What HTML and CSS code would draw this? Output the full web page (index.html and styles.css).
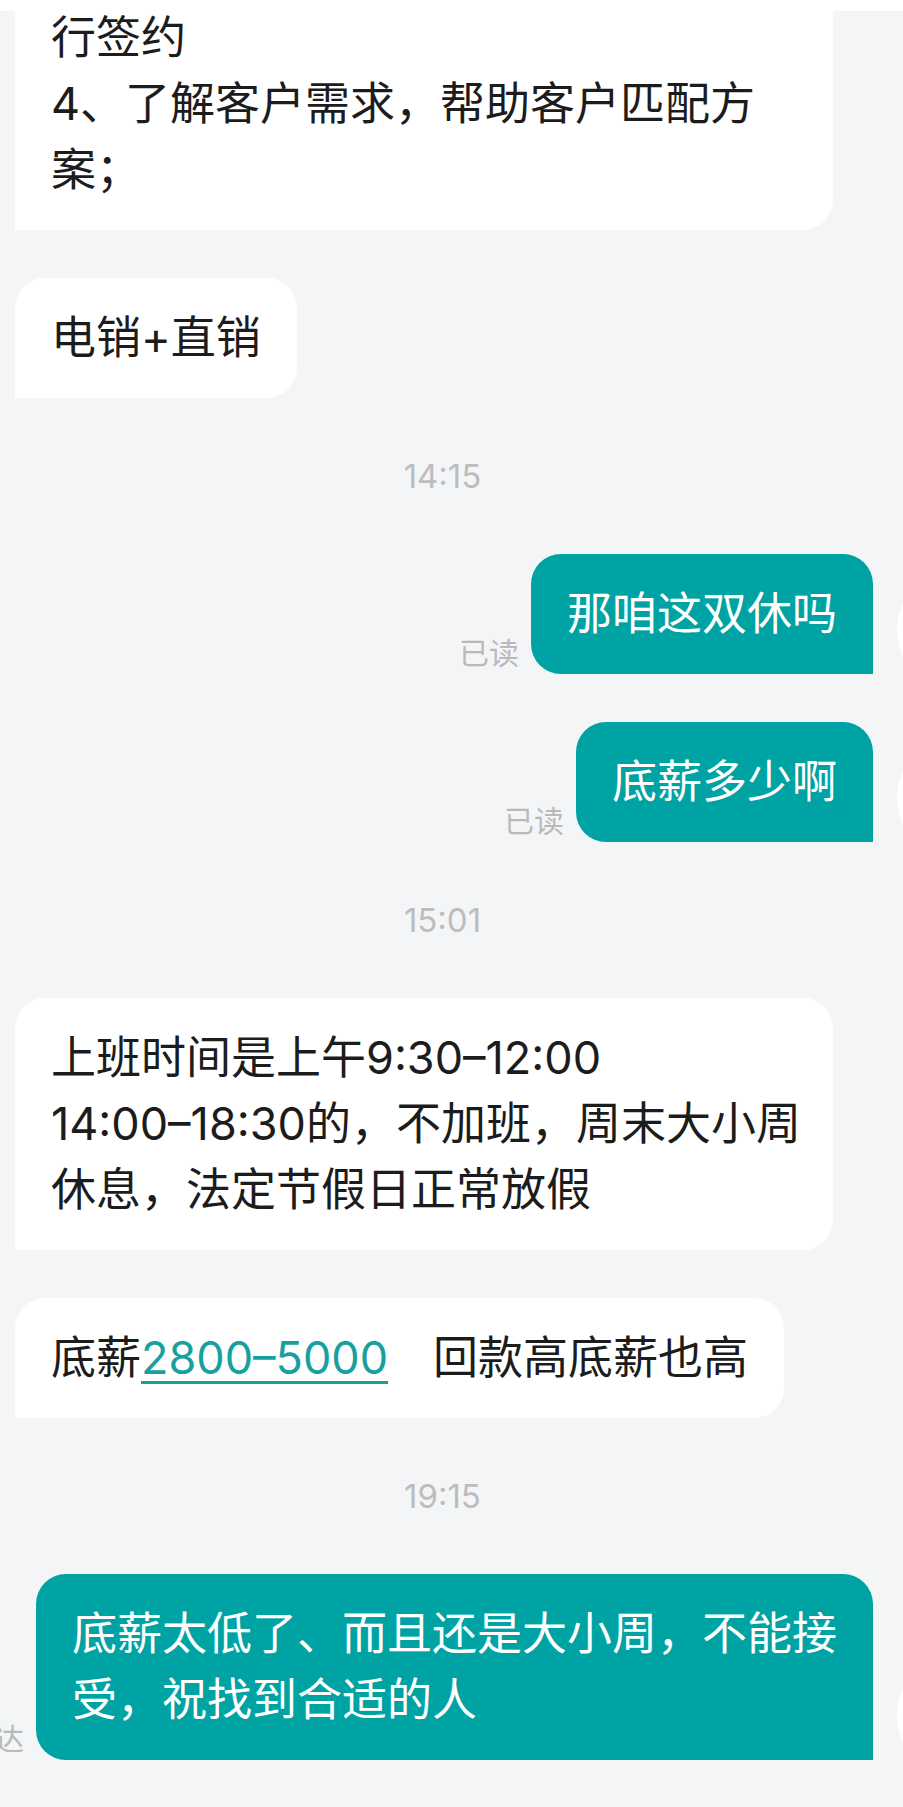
FILE: index.html
```html
<!DOCTYPE html>
<html lang="zh-CN">
<head>
<meta charset="utf-8">
<title>聊天</title>
<link rel="stylesheet" href="styles.css">
</head>
<body>
<div class="topbar"></div>
<main class="chat">
  <div class="row recv first">
    <div class="bubble in wide">行签约<br>4、了解客户需求，帮助客户匹配方<br>案；</div>
  </div>
  <div class="row recv">
    <div class="bubble in">电销+直销</div>
  </div>
  <div class="time">14:15</div>
  <div class="row sent">
    <span class="status">已读</span>
    <div class="bubble out">那咱这双休吗</div>
    <span class="avatar"></span>
  </div>
  <div class="row sent">
    <span class="status">已读</span>
    <div class="bubble out">底薪多少啊</div>
    <span class="avatar"></span>
  </div>
  <div class="time">15:01</div>
  <div class="row recv">
    <div class="bubble in wide">上班时间是上午9:30–12:00<br>14:00–18:30的，不加班，周末大小周<br>休息，法定节假日正常放假</div>
  </div>
  <div class="row recv">
    <div class="bubble in">底薪<a class="link">2800–5000</a>&emsp;回款高底薪也高</div>
  </div>
  <div class="time">19:15</div>
  <div class="row sent">
    <span class="status">已送达</span>
    <div class="bubble out wide">底薪太低了、而且还是大小周，不能接<br>受，祝找到合适的人</div>
    <span class="avatar"></span>
  </div>
</main>
</body>
</html>
```
FILE: styles.css
```css
html, body {
  margin: 0;
  padding: 0;
  background: #f4f5f7;
  overflow: hidden;
}

body {
  font-family: Inter, "Noto Sans CJK SC", sans-serif;
  color: #1c1c1c;
  width: 903px;
  height: 1807px;
}

.topbar {
  height: 11px;
  background: #ffffff;
  position: relative;
  z-index: 2;
}

.chat {
  display: flex;
  flex-direction: column;
  gap: 48px;
  overflow: hidden;
  height: 1796px;
}

.row {
  display: flex;
  align-items: flex-end;
}

.row.recv {
  padding-left: 15px;
  justify-content: flex-start;
}

.row.first {
  margin-top: -33px;
}

.row.sent {
  justify-content: flex-end;
  gap: 12px;
  margin-right: -118px;
}

.bubble {
  box-sizing: border-box;
  font-size: 45px;
  line-height: 66px;
  padding: 27px 36px;
  white-space: nowrap;
  flex-shrink: 0;
}

.bubble.in {
  background: #ffffff;
  color: #1c1c1c;
  border-radius: 30px 30px 30px 0;
}

.bubble.in.wide {
  width: 818px;
}

.bubble.out {
  background: #00a3a3;
  color: #ffffff;
  border-radius: 30px 30px 0 30px;
}

.bubble.out.wide {
  width: 837px;
}

.link {
  color: #17a0a0;
  text-decoration: underline;
  text-decoration-thickness: 3px;
  text-underline-offset: 7px;
}

.status {
  font-size: 30px;
  line-height: 30px;
  color: #bababa;
  margin-bottom: 6px;
  white-space: nowrap;
  flex-shrink: 0;
}

.avatar {
  width: 124px;
  height: 124px;
  border-radius: 50%;
  background: #ffffff;
  margin-left: 12px;
  margin-bottom: -18px;
  flex-shrink: 0;
}

.time {
  height: 60px;
  line-height: 60px;
  font-size: 33px;
  color: #bdbdbd;
  text-align: center;
  padding-right: 18px;
}
```
